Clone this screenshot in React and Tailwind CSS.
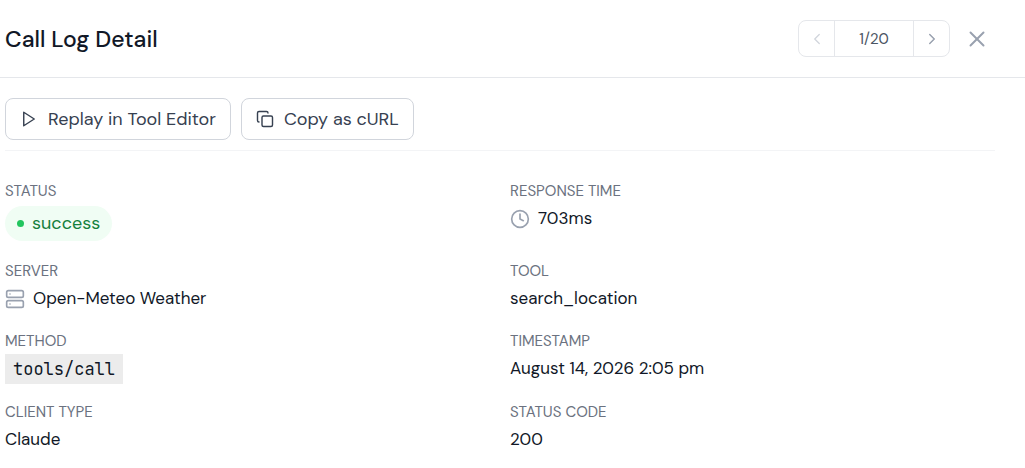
import { ChevronLeft, ChevronRight, Clock, Copy, Server, X } from "lucide-react";

function PlayIcon(props) {
  return (
    <svg viewBox="0 0 24 24" fill="none" stroke="currentColor" strokeLinecap="round" strokeLinejoin="round" {...props}>
      <path d="M5 3 19 12 5 21Z" />
    </svg>
  );
}

function ActionButton({ icon: Icon, children }) {
  return (
    <button
      type="button"
      className="flex h-[42px] items-center gap-[10px] rounded-lg border border-gray-300 bg-white px-[14px] text-[18px] leading-[25px] text-[#374151]"
    >
      <Icon className="size-[18px]" strokeWidth={1.9} aria-hidden="true" />
      {children}
    </button>
  );
}

function Field({ label, children }) {
  return (
    <div className="flex flex-col items-start gap-[5px]">
      <dt className="text-[15px] leading-5 text-[#6b7280] uppercase">{label}</dt>
      <dd className="flex min-h-[25px] items-center gap-2 text-[17px] leading-[25px]">{children}</dd>
    </div>
  );
}

export default function App() {
  return (
    <main className="bg-white font-['DM_Sans','Inter',sans-serif] text-[#111827]">
      <header className="flex items-center justify-between border-b border-gray-200 py-5 pr-[35px] pl-[5px]">
        <h1 className="text-[23px] leading-[30px] font-medium">Call Log Detail</h1>
        <div className="flex items-center gap-[14px]">
          <nav
            aria-label="Call log entries"
            className="flex h-[37px] items-stretch divide-x divide-gray-200 overflow-hidden rounded-lg border border-gray-200"
          >
            <button type="button" aria-label="Previous entry" disabled className="flex w-[36px] items-center justify-center text-gray-300">
              <ChevronLeft className="size-[18px]" strokeWidth={1.75} />
            </button>
            <span className="flex w-[79px] items-center justify-center text-[15px] leading-5 text-[#4b5563]">1/20</span>
            <button type="button" aria-label="Next entry" className="flex w-[35px] items-center justify-center text-gray-400">
              <ChevronRight className="size-[18px]" />
            </button>
          </nav>
          <button type="button" aria-label="Close" className="text-gray-400">
            <X className="size-[26px]" strokeWidth={1.8} />
          </button>
        </div>
      </header>

      <section className="pt-5 pr-[30px] pb-4 pl-[5px]">
        <div className="flex gap-[10px] border-b border-gray-100 pb-[10px]">
          <ActionButton icon={PlayIcon}>Replay in Tool Editor</ActionButton>
          <ActionButton icon={Copy}>Copy as cURL</ActionButton>
        </div>

        <dl className="grid grid-cols-2 gap-5 pt-[30px]">
          <Field label="Status">
            <span className="flex h-[35px] items-center gap-2 rounded-full bg-[#f0fdf4] px-3 text-[18px] text-[#15803d]">
              <span className="size-[7px] rounded-full bg-[#22c55e]" />
              success
            </span>
          </Field>
          <Field label="Response Time">
            <Clock className="size-5 text-gray-400" aria-hidden="true" />
            703ms
          </Field>
          <Field label="Server">
            <Server className="size-5 text-gray-400" aria-hidden="true" />
            Open-Meteo Weather
          </Field>
          <Field label="Tool">search_location</Field>
          <Field label="Method">
            <code className="-my-[2px] bg-[#ececec] px-2 py-[2px] font-['JetBrains_Mono','DejaVu_Sans_Mono',monospace] leading-[26px]">
              tools/call
            </code>
          </Field>
          <Field label="Timestamp">August 14, 2026 2:05 pm</Field>
          <Field label="Client Type">Claude</Field>
          <Field label="Status Code">200</Field>
        </dl>
      </section>
    </main>
  );
}
